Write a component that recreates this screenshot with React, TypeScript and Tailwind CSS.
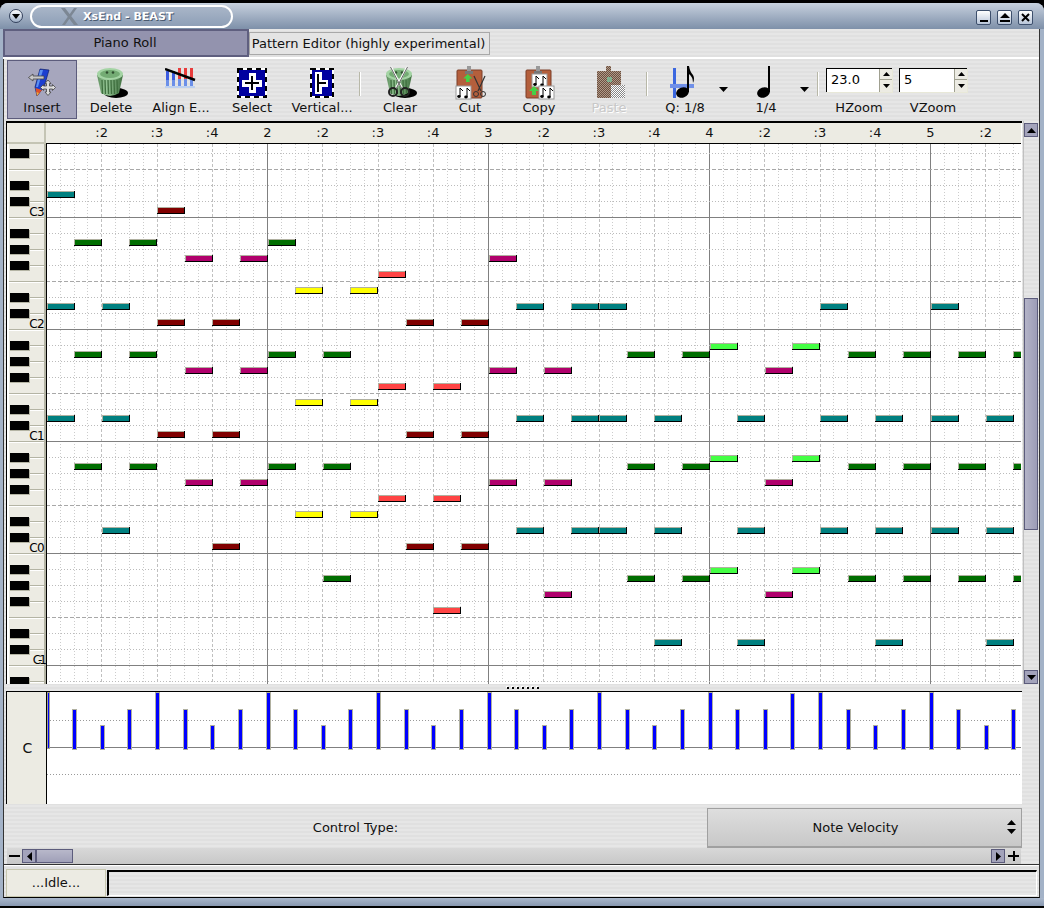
const stripes =
  "bg-[repeating-linear-gradient(0deg,#e0e0e0_0px,#e0e0e0_2px,#e6e6e6_2px,#e6e6e6_4px)]";

const ruler = [":2", ":3", ":4", "2", ":2", ":3", ":4", "3", ":2", ":3", ":4", "4", ":2", ":3", ":4", "5", ":2"];

const STEP = 27.625;

const noteColors: Record<string, string> = {
  teal: "#008080",
  maroon: "#800000",
  green: "#006e00",
  pink: "#b0006c",
  salmon: "#ff4444",
  yellow: "#ffff00",
  lime: "#44ff44",
};

// [row centre y, colour, eighth positions]
const notes: [number, string, number[]][] = [
  [194, "teal", [0]],
  [210, "maroon", [4]],
  [242, "green", [1, 3, 8]],
  [258, "pink", [5, 7, 16]],
  [274, "salmon", [12]],
  [290, "yellow", [9, 11]],
  [306, "teal", [0, 2, 17, 19, 20, 28, 32]],
  [322, "maroon", [4, 6, 13, 15]],
  [346, "lime", [24, 27]],
  [354, "green", [1, 3, 8, 10, 21, 23, 29, 31, 33, 35]],
  [370, "pink", [5, 7, 16, 18, 26]],
  [386, "salmon", [12, 14]],
  [402, "yellow", [9, 11]],
  [418, "teal", [0, 2, 17, 19, 20, 22, 25, 28, 30, 32, 34]],
  [434, "maroon", [4, 6, 13, 15]],
  [458, "lime", [24, 27]],
  [466, "green", [1, 3, 8, 10, 21, 23, 29, 31, 33, 35]],
  [482, "pink", [5, 7, 16, 18, 26]],
  [498, "salmon", [12, 14]],
  [514, "yellow", [9, 11]],
  [530, "teal", [2, 17, 19, 20, 22, 25, 28, 30, 32, 34]],
  [546, "maroon", [6, 13, 15]],
  [570, "lime", [24, 27]],
  [578, "green", [10, 21, 23, 29, 31, 33, 35]],
  [594, "pink", [18, 26]],
  [610, "salmon", [14]],
  [642, "teal", [22, 25, 30, 34]],
];

const blackKeys = [149, 181, 197, 229, 245, 261, 293, 309, 341, 357, 373, 405, 421, 453, 469, 485, 517, 533, 565, 581, 597, 629, 645, 677];
const octaveLabels: [string, number][] = [["C3", 216], ["C2", 328], ["C1", 440], ["C0", 552], ["C-1", 664]];

const velocityTops = [692, 709, 725, 709];
function velocityTop(k: number) {
  if (k === 25 || k === 26) return 709;
  if (k === 27) return 693;
  return velocityTops[k % 4];
}

function Grid() {
  const vertical = Array.from({ length: 71 }, (_, i) => i);
  const horizontal = Array.from({ length: 34 }, (_, i) => 153 + i * 16);
  return (
    <svg width={975} height={540} viewBox="46 144 975 540" className="block" shapeRendering="crispEdges">
      <rect x={46} y={144} width={975} height={540} fill="#fff" />
      {vertical.map((i) => {
        const x = Math.round(46 + i * 13.8125) + 0.5;
        if (i % 16 === 0) return <line key={i} x1={x} x2={x} y1={144} y2={684} stroke="#808080" />;
        if (i % 4 === 0) return <line key={i} x1={x} x2={x} y1={144} y2={684} stroke="#c0c0c0" strokeDasharray="3 2" />;
        return <line key={i} x1={x} x2={x} y1={144} y2={684} stroke="#cccccc" strokeDasharray="1 2" />;
      })}
      {horizontal.map((y) => {
        const ly = y + 0.5;
        if ((y - 217) % 112 === 0) return <line key={y} x1={46} x2={1021} y1={ly} y2={ly} stroke="#808080" />;
        if ((y - 169) % 112 === 0) return <line key={y} x1={46} x2={1021} y1={ly} y2={ly} stroke="#a8a8a8" strokeDasharray="4 2" />;
        return <line key={y} x1={46} x2={1021} y1={ly} y2={ly} stroke="#bbbbbb" strokeDasharray="1 2" />;
      })}
      <rect x={46} y={144} width={1} height={540} fill="#000" />
      {notes.map(([cy, color, xs]) =>
        xs.map((k) => {
          const x = Math.round(46.6 + k * STEP);
          return (
            <g key={cy + "-" + k}>
              <rect x={x} y={cy - 3} width={28} height={7} fill="#000" />
              <rect x={x} y={cy - 3} width={27} height={6} fill="#b0b0a0" />
              <rect x={x + 1} y={cy - 2} width={26} height={5} fill={noteColors[color]} />
            </g>
          );
        }),
      )}
    </svg>
  );
}

function Keys() {
  const lines = Array.from({ length: 34 }, (_, i) => 153 + i * 16);
  return (
    <svg width={39} height={540} viewBox="7 144 39 540" className="block shrink-0" shapeRendering="crispEdges">
      <rect x={7} y={144} width={39} height={540} fill="#ecebe3" />
      <rect x={7} y={144} width={2} height={540} fill="#fff" />
      {lines.map((y) => {
        const full = (y - 217) % 112 === 0 || (y - 169) % 112 === 0;
        return (
          <g key={y}>
            <rect x={full ? 9 : 30} y={y} width={full ? 36 : 15} height={1} fill="#b4b4a4" />
            <rect x={full ? 9 : 30} y={y + 1} width={full ? 36 : 15} height={1} fill="#fff" />
          </g>
        );
      })}
      <rect x={44} y={144} width={2} height={540} fill="#b4b4a4" />
      {blackKeys.map((y) => (
        <g key={y}>
          <rect x={10} y={y + 1} width={20} height={9} fill="#b4b4a4" />
          <rect x={10} y={y} width={19} height={9} fill="#000" />
        </g>
      ))}
      {octaveLabels.map(([label, y]) => (
        <text
          key={label}
          x={44}
          y={y}
          textAnchor="end"
          fontSize={12}
          letterSpacing={label.length > 2 ? -3 : -0.6}
          fill="#000"
          fontFamily="DejaVu Sans, sans-serif"
        >
          {label}
        </text>
      ))}
    </svg>
  );
}

function Velocity() {
  const bars = Array.from({ length: 36 }, (_, i) => i);
  return (
    <svg width={975} height={112} viewBox="47 692 975 112" className="block" shapeRendering="crispEdges">
      <rect x={47} y={692} width={975} height={112} fill="#fff" />
      <line x1={47} x2={1021} y1={720.5} y2={720.5} stroke="#999" strokeDasharray="1 2" />
      <line x1={47} x2={1021} y1={774.5} y2={774.5} stroke="#999" strokeDasharray="1 2" />
      <rect x={47} y={747} width={974} height={1} fill="#808080" />
      {bars.map((k) => {
        const top = velocityTop(k);
        if (k === 0)
          return (
            <g key={k}>
              <rect x={47} y={692} width={3} height={57} fill="#a0a090" />
              <rect x={48} y={693} width={1} height={55} fill="#0000ff" />
            </g>
          );
        const x = Math.round(46.5 + k * STEP) - 2;
        return (
          <g key={k}>
            <rect x={x} y={top} width={5} height={750 - top} fill="#b0b0a0" />
            <rect x={x + 1} y={top + 1} width={3} height={748 - top} fill="#0000ff" />
          </g>
        );
      })}
    </svg>
  );
}

function Arrow({ up }: { up?: boolean }) {
  return (
    <svg width={9} height={5} viewBox="0 0 9 5" className="block">
      <path d={up ? "M4.5 0 9 5H0Z" : "M0 0H9L4.5 5Z"} fill="#000" />
    </svg>
  );
}

function ScrollButton({ children, className = "" }: { children: React.ReactNode; className?: string }) {
  return (
    <div className={"flex items-center justify-center bg-[#a3a3bb] border border-[#5c5c7c] " + className}>{children}</div>
  );
}

function TrashCan({ scissors }: { scissors?: boolean }) {
  const id = scissors ? "canBodyClear" : "canBody";
  return (
    <svg width={34} height={34} viewBox="0 0 34 34">
      <defs>
        <linearGradient id={id} x1="0" x2="1" y1="0" y2="0">
          <stop offset="0" stopColor="#5f8f5f" />
          <stop offset="0.35" stopColor="#94c494" />
          <stop offset="1" stopColor="#3f6f3f" />
        </linearGradient>
      </defs>
      <ellipse cx={22} cy={27} rx={12} ry={5} fill="#000" />
      <path d="M3 9 7 27Q16 33 25 27L29 9Z" fill={`url(#${id})`} />
      {[8, 11, 14, 17, 20, 23].map((x) => (
        <path key={x} d={`M${x} 14 ${x + 0.5} 28`} stroke="#3f6f3f" strokeWidth={1.3} />
      ))}
      <ellipse cx={16} cy={8} rx={13} ry={6} fill="#a4d4a4" />
      <ellipse cx={16} cy={8} rx={10} ry={4} fill="#74ac74" />
      <circle cx={13} cy={6.5} r={1.3} fill="#2f4f2f" />
      <circle cx={19} cy={6.5} r={1.3} fill="#2f4f2f" />
      {scissors && (
        <g fill="none" strokeWidth={2}>
          <path d="M8 1 19 22M24 1 13 22" stroke="#fff" />
          <path d="M7.5 1 18.5 22M24.5 1 13.5 22" stroke="#222" strokeWidth={0.7} />
          <circle cx={10} cy={26} r={4} stroke="#222" />
          <circle cx={22} cy={26} r={4} stroke="#222" />
        </g>
      )}
    </svg>
  );
}

function MiniNotes({ x, y }: { x: number; y: number }) {
  return (
    <g transform={`translate(${x} ${y})`}>
      <rect x={0} y={0} width={15} height={13} fill="#fff" stroke="#999" />
      <path d="M4 2V10M11 2V11" stroke="#000" />
      <ellipse cx={3} cy={10.5} rx={1.8} ry={1.4} fill="#000" />
      <ellipse cx={10} cy={11} rx={1.8} ry={1.4} fill="#000" />
      <path d="M4 2 7 5M11 2 14 5" stroke="#000" />
    </g>
  );
}

function Clipboard({ kind }: { kind: "cut" | "copy" }) {
  return (
    <svg width={32} height={34} viewBox="0 0 32 34">
      <rect x={3} y={4} width={25} height={28} rx={1} fill="#b45f3c" stroke="#7a3f28" />
      <rect x={13} y={0} width={4} height={6} fill="#999" />
      <rect x={11} y={5} width={8} height={3} fill="#777" />
      {kind === "copy" && <MiniNotes x={9} y={8} />}
      <path
        d="M7 26H10V30H14V26H17L12 21Z"
        fill="#46d046"
        transform={kind === "cut" ? "translate(3 -11) scale(0.9 0.9)" : "translate(-1 -1)"}
      />
      {kind === "cut" ? (
        <g fill="none">
          <path d="M20 10 27 25M31 10 24 25" stroke="#333" strokeWidth={1.2} />
          <circle cx={22} cy={28} r={2.5} stroke="#333" />
          <circle cx={29} cy={28} r={2.5} stroke="#333" />
          <MiniNotes x={2} y={20} />
        </g>
      ) : (
        <MiniNotes x={16} y={20} />
      )}
    </svg>
  );
}

function PasteIcon() {
  return (
    <svg width={32} height={34} viewBox="0 0 32 34" shapeRendering="crispEdges">
      <defs>
        <pattern id="dither" width={2} height={2} patternUnits="userSpaceOnUse">
          <rect width={2} height={2} fill="#b09888" />
          <rect width={1} height={1} fill="#6a5040" />
          <rect x={1} y={1} width={1} height={1} fill="#6a5040" />
        </pattern>
        <pattern id="dither2" width={2} height={2} patternUnits="userSpaceOnUse">
          <rect width={2} height={2} fill="#fff" />
          <rect width={1} height={1} fill="#888" />
          <rect x={1} y={1} width={1} height={1} fill="#888" />
        </pattern>
      </defs>
      <rect x={4} y={5} width={24} height={27} fill="url(#dither)" />
      <rect x={13} y={0} width={5} height={7} fill="url(#dither)" />
      <rect x={18} y={19} width={14} height={13} fill="url(#dither2)" />
      <rect x={14} y={11} width={5} height={5} fill="#7fb08f" />
    </svg>
  );
}

function BlueSquare({ width, vertical }: { width: number; vertical?: boolean }) {
  return (
    <svg width={width} height={30} viewBox={`0 0 ${width} 30`} shapeRendering="crispEdges">
      <rect x={1} y={1} width={width - 2} height={28} fill="#0000a0" stroke="#fff" strokeWidth={2} />
      <rect x={1} y={1} width={width - 2} height={28} fill="none" stroke="#000" strokeWidth={2} strokeDasharray="5 4" />
      {vertical ? (
        <g fill="none">
          <path d="M8 4V26M8 15H18" stroke="#fff" strokeWidth={7} />
          <path d="M8 6V24M8 15H16" stroke="#000" strokeWidth={2} />
        </g>
      ) : (
        <g fill="none">
          <path d="M15 5V25M5 15H25" stroke="#fff" strokeWidth={7} />
          <path d="M15 8V22M8 15H22" stroke="#000" strokeWidth={2} />
        </g>
      )}
    </svg>
  );
}

function AlignIcon() {
  return (
    <svg width={32} height={30} viewBox="0 0 32 30" shapeRendering="crispEdges">
      {[1, 7, 13, 19, 25].map((x, i) => (
        <g key={x}>
          {i >= 2 && <rect x={x} y={0} width={3} height={11} fill="#e83c3c" />}
          <rect x={x} y={11} width={3} height={9} fill="#6b8fe8" />
        </g>
      ))}
      {[1, 7].map((x) => (
        <rect key={x} x={x} y={3} width={3} height={9} fill="#3c5ce0" />
      ))}
      <rect x={0} y={18} width={30} height={2} fill="#bcd0f0" />
      <path d="M0 1 30 12" stroke="#000" strokeWidth={2.5} shapeRendering="auto" />
    </svg>
  );
}

function InsertIcon() {
  return (
    <svg width={28} height={30} viewBox="0 0 28 30">
      <path d="M12 1 21 2 16 19 9 28 7 19Z" fill="#1c3fd0" stroke="#10206c" strokeWidth={0.7} />
      <path d="M12 2 15 2 10 19 8 19Z" fill="#5c90f0" />
      <path d="M7.5 20 14 22 9 28Z" fill="#e05028" />
      <path d="M8.5 24 11 25 9 28Z" fill="#e8b040" />
      <path d="M0.5 9.5 5 6V8H16V11H5V13Z" fill="#c8c8c8" stroke="#444" strokeWidth={0.8} />
      <path
        d="M20 12 23 15.5H21.5V18H24.5V16.5L27.5 19.5 24.5 22.5V21H21.5V24H23L20 27.5 17 24H18.5V21H15.5V22.5L12.5 19.5 15.5 16.5V18H18.5V15.5H17Z"
        fill="#dcdcdc"
        stroke="#444"
        strokeWidth={0.8}
      />
    </svg>
  );
}

function NoteIcon({ eighth }: { eighth?: boolean }) {
  return (
    <svg width={32} height={34} viewBox="0 0 32 34">
      {eighth && (
        <g>
          <rect x={4} y={2} width={3} height={30} fill="#3c68e0" />
          <rect x={1} y={18} width={24} height={4} fill="#7090e8" />
        </g>
      )}
      <ellipse cx={13.5} cy={26.5} rx={6.5} ry={5} fill="#000" transform="rotate(-20 13.5 26.5)" />
      <rect x={18} y={0} width={2} height={26} fill="#000" />
      {eighth && <path d="M20 0Q21 6 24 9 26 12 24 17 24 11 20 8Z" fill="#000" />}
    </svg>
  );
}

function ToolButton({ label, active, disabled, children, className = "w-[70px]" }: {
  label: string;
  active?: boolean;
  disabled?: boolean;
  children: React.ReactNode;
  className?: string;
}) {
  return (
    <div
      className={
        "flex h-[59px] shrink-0 flex-col items-center " +
        className +
        (active ? " border border-[#5c5c7c] bg-[#a6a6bd]" : " border border-transparent")
      }
    >
      <div className="flex h-[39px] items-center justify-center pt-[4px]">{children}</div>
      <div
        className={
          "whitespace-nowrap text-[13px] leading-[16px] " +
          (disabled ? "text-[#c8c8c8] [text-shadow:1px_1px_0_#fff]" : "text-[#111]")
        }
      >
        {label}
      </div>
    </div>
  );
}

function Separator() {
  return <div className="mt-[12px] h-[24px] w-[2px] shrink-0 border-l border-[#b8b8a8] bg-white" />;
}

function SpinBox({ value, label, className }: { value: string; label: string; className: string }) {
  return (
    <div className={"flex shrink-0 flex-col " + className}>
      <div className="mt-[8px] flex h-[24px] border-t border-l border-black bg-white shadow-[1px_1px_0_#e8e8d8]">
        <div className="flex-1 pl-[4px] text-[13px] leading-[22px] text-black">{value}</div>
        <div className="flex w-[13px] flex-col border-l border-[#a0a090] bg-[#ecebe3]">
          <div className="flex h-[11px] items-center justify-center border-b border-[#a0a090]">
            <svg width={7} height={4} viewBox="0 0 7 4"><path d="M3.5 0 7 4H0Z" fill="#000" /></svg>
          </div>
          <div className="flex h-[11px] items-center justify-center">
            <svg width={7} height={4} viewBox="0 0 7 4"><path d="M0 0H7L3.5 4Z" fill="#000" /></svg>
          </div>
        </div>
      </div>
      <div className="mt-[8px] text-center text-[13px] leading-[16px] text-[#111]">{label}</div>
    </div>
  );
}

function TitleButton({ children }: { children: React.ReactNode }) {
  return (
    <div className="flex h-[15px] w-[15px] items-center justify-center rounded-[2px] border border-[#3d4f6c] bg-gradient-to-b from-white to-[#b9c6d9]">
      {children}
    </div>
  );
}

export default function App() {
  return (
    <div className={"flex h-[908px] w-[1044px] flex-col overflow-hidden bg-black pt-[3px] font-['DejaVu_Sans',sans-serif] text-[13px]"}>
      <div className="flex h-[903px] flex-col rounded-t-[8px] bg-[#a3b2c7]">
        {/* title bar */}
        <div className="flex h-[26px] shrink-0 items-center rounded-t-[8px] bg-gradient-to-b from-[#c7d1de] to-[#7e90a9] pl-[9px] pr-[11px]">
          <div className="flex h-[14px] w-[14px] items-center justify-center rounded-full border border-[#33415c] bg-gradient-to-b from-white to-[#9fb0c8]">
            <svg width={8} height={5} viewBox="0 0 8 5"><path d="M0 0H8L4 5Z" fill="#000" /></svg>
          </div>
          <div className="ml-[7px] flex h-[23px] w-[203px] items-center rounded-full border-2 border-white bg-gradient-to-b from-[#a9b6c8] to-[#8e9fb7] pl-[29px]">
            <svg width={17} height={17} viewBox="0 0 17 17">
              <path d="M0 0H4L17 17H13ZM13 0H16L4 17H1Z" fill="#7c8794" />
            </svg>
            <span className="ml-[5px] whitespace-nowrap text-[11px] font-bold leading-none text-white [text-shadow:1px_1px_0_#4a5a70]">
              XsEnd - BEAST
            </span>
          </div>
          <div className="ml-auto mt-[2px] flex gap-[6px]">
            <TitleButton>
              <div className="mt-[7px] h-[2px] w-[8px] bg-black" />
            </TitleButton>
            <TitleButton>
              <svg width={10} height={9} viewBox="0 0 10 9"><path d="M5 0 10 5H0ZM0 7H10V9H0Z" fill="#000" /></svg>
            </TitleButton>
            <TitleButton>
              <svg width={9} height={9} viewBox="0 0 9 9"><path d="M1 1 8 8M8 1 1 8" stroke="#000" strokeWidth={2} /></svg>
            </TitleButton>
          </div>
        </div>

        {/* window body */}
        <div className={"ml-[3px] mr-[4px] flex h-[869px] shrink-0 flex-col border-x border-b border-x-[#333] border-b-black " + stripes}>
          {/* tabs */}
          <div className="flex h-[28px] shrink-0">
            <div className="-ml-px flex h-[28px] w-[246px] items-center justify-center border-2 border-[#5f5f7f] bg-[#9393ae] pr-[2px] text-[13px] text-[#111]">
              Piano Roll
            </div>
            <div className="mt-[3px] flex h-[23px] w-[241px] items-center justify-center border border-[#a8a8a8] bg-[#e4e4e4] pr-[2px] text-[13px] text-[#111]">
              Pattern Editor (highly experimental)
            </div>
          </div>

          {/* toolbar */}
          <div className="-ml-px flex h-[64px] shrink-0 items-start border-t-2 border-white pl-[4px] pt-[1px]">
            <ToolButton label="Insert" active><InsertIcon /></ToolButton>
            <ToolButton label="Delete" className="ml-[-1px] w-[70px]"><TrashCan /></ToolButton>
            <ToolButton label="Align E..."><AlignIcon /></ToolButton>
            <ToolButton label="Select" className="ml-px w-[70px]"><BlueSquare width={30} /></ToolButton>
            <ToolButton label="Vertical..."><BlueSquare width={24} vertical /></ToolButton>
            <div className="ml-[2px]"><Separator /></div>
            <ToolButton label="Clear" className="ml-[4px] w-[70px]"><TrashCan scissors /></ToolButton>
            <ToolButton label="Cut"><Clipboard kind="cut" /></ToolButton>
            <ToolButton label="Copy" className="ml-[-1px] w-[70px]"><Clipboard kind="copy" /></ToolButton>
            <ToolButton label="Paste" disabled><PasteIcon /></ToolButton>
            <div className="ml-[2px]"><Separator /></div>
            <ToolButton label="Q: 1/8" className="ml-[6px] w-[62px]"><NoteIcon eighth /></ToolButton>
            <div className="mt-[27px] w-[22px] shrink-0 pl-[3px]"><Arrow /></div>
            <ToolButton label="1/4" className="w-[56px]"><NoteIcon /></ToolButton>
            <div className="mt-[27px] w-[24px] shrink-0 pl-[6px]"><Arrow /></div>
            <div className="ml-[-1px]"><Separator /></div>
            <SpinBox value="23.0" label="HZoom" className="ml-[7px] w-[66px]" />
            <SpinBox value="5" label="VZoom" className="ml-[7px] w-[68px]" />
          </div>

          {/* piano roll */}
          <div className="ml-[2px] flex h-[563px] shrink-0">
            <div className="flex w-[1016px] shrink-0 border-t-2 border-l border-black bg-white">
              <div className="w-[39px] shrink-0">
                <div className="h-[21px] border-r-2 border-b-2 border-[#c4c4b4] bg-[#ecebe3]" />
                <Keys />
              </div>
              <div className="w-[975px]">
                <div className="flex h-[21px] overflow-hidden border-b border-black bg-[#ecebe3] pl-[28px]">
                  {ruler.map((label, i) => (
                    <div key={i} className="w-[55.25px] shrink-0 text-center text-[13px] leading-[20px] text-[#111]">
                      {label}
                    </div>
                  ))}
                </div>
                <Grid />
              </div>
            </div>
            <div className="ml-px flex w-[15px] shrink-0 flex-col border-l border-[#c0c0c0] pt-[2px]">
              <ScrollButton className="h-[14px]"><Arrow up /></ScrollButton>
              <div className="h-[161px]" />
              <div className="h-[232px] border border-[#5c5c7c] bg-gradient-to-r from-[#b4b4c8] to-[#9c9cb6]" />
              <div className="h-[140px]" />
              <ScrollButton className="h-[14px]"><Arrow /></ScrollButton>
            </div>
          </div>

          {/* splitter */}
          <div className="flex h-[7px] shrink-0 items-center justify-center">
            <div className="ml-[3px] flex gap-[3px]">
              {[0, 1, 2, 3, 4, 5, 6].map((i) => (
                <div key={i} className="h-[2px] w-[2px] bg-black shadow-[-1px_-1px_0_#fff]" />
              ))}
            </div>
          </div>

          {/* velocity */}
          <div className="ml-[2px] flex h-[113px] w-[1016px] shrink-0 border-t border-t-black">
            <div className="flex w-[41px] shrink-0 items-center justify-center border-r border-r-black border-l border-l-black bg-[#ecebe3] pl-[2px] text-[14px] text-[#111]">
              C
            </div>
            <Velocity />
          </div>

          {/* control type */}
          <div className="ml-[2px] mt-[4px] flex h-[40px] w-[1016px] shrink-0">
            <div className="flex w-[701px] items-center justify-center pr-[2px] text-[13px] text-[#111]">Control Type:</div>
            <div className="relative flex flex-1 items-center justify-center border-t border-b-2 border-l border-r border-t-[#a0a0a0] border-b-[#a0a0a0] border-l-[#a0a0a0] border-r-[#a0a0a0] bg-gradient-to-b from-[#dedede] to-[#c8c8c8] pr-[18px] text-[13px] text-[#111]">
              Note Velocity
              <div className="absolute right-[5px] top-[11px] flex flex-col gap-[4px]">
                <Arrow up />
                <Arrow />
              </div>
            </div>
          </div>

          {/* horizontal scroll */}
          <div className="ml-[3px] flex h-[16px] w-[1014px] shrink-0 items-center bg-gradient-to-b from-[#d8d8d8] to-[#c8c8c8]">
            <div className="flex h-[14px] w-[14px] shrink-0 items-center justify-center"><div className="h-[2px] w-[11px] bg-black" /></div>
            <ScrollButton className="ml-px h-[14px] w-[14px]">
              <svg width={5} height={9} viewBox="0 0 5 9"><path d="M5 0V9L0 4.5Z" fill="#000" /></svg>
            </ScrollButton>
            <div className="h-[14px] w-[37px] border border-[#5c5c7c] bg-gradient-to-b from-[#b8b8ca] to-[#a0a0b8]" />
            <div className="flex-1" />
            <ScrollButton className="h-[14px] w-[14px]">
              <svg width={5} height={9} viewBox="0 0 5 9"><path d="M0 0V9L5 4.5Z" fill="#000" /></svg>
            </ScrollButton>
            <div className="relative ml-px h-[14px] w-[15px] shrink-0">
              <div className="absolute left-[2px] top-[6px] h-[2px] w-[11px] bg-black" />
              <div className="absolute left-[6.5px] top-[2px] h-[10px] w-[2px] bg-black" />
            </div>
          </div>

          {/* status bar */}
          <div className="h-[1px] shrink-0 bg-[#333]" />
          <div className="flex h-[32px] shrink-0 border-t border-white pl-[2px] pr-[2px] pt-[3px]">
            <div className="flex h-[28px] w-[100px] shrink-0 items-center justify-center border border-[#c8c8b0] bg-[#ecebe3] text-[13px] text-[#111]">
              ...Idle...
            </div>
            <div className="ml-px mt-px h-[26px] flex-1 border-l-2 border-t-2 border-r border-b border-l-black border-t-black border-r-white border-b-white" />
          </div>
        </div>
        <div className="h-[8px] shrink-0 bg-gradient-to-b from-[#a9b7cb] to-[#8898b0]" />
      </div>
    </div>
  );
}
